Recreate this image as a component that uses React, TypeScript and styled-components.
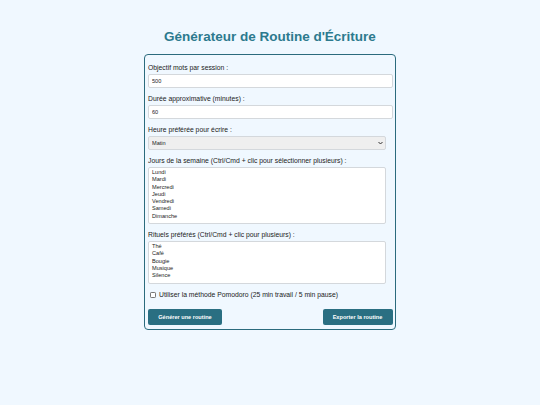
import styled, { createGlobalStyle } from "styled-components";

const GlobalStyle = createGlobalStyle`
  body {
    margin: 0;
    background: #f0f8ff;
    font-family: "Liberation Sans", Arial, sans-serif;
    color: #222;
  }
`;

const Page = styled.div`
  padding-top: 28px;
`;

const Title = styled.h1`
  margin: 0 0 8px;
  text-align: center;
  font-size: 13.5px;
  line-height: 18px;
  font-weight: bold;
  color: #2c7a8e;
`;

const Card = styled.form`
  width: 252px;
  box-sizing: border-box;
  margin: 0 auto;
  padding: 8px 3px 4px 3px;
  border: 1.5px solid #2b6b7d;
  border-radius: 4px;
  background: #f0f8ff;
`;

const Field = styled.div`
  margin-bottom: 6px;
`;

const Label = styled.label`
  display: block;
  font-size: 6.8px;
  line-height: 10px;
  margin-bottom: 1px;
  color: #222;
`;

const TextInput = styled.input`
  display: block;
  box-sizing: border-box;
  width: 245px;
  height: 14px;
  margin: 0;
  padding: 0 3px;
  border: 1px solid #d4d8dc;
  border-radius: 2px;
  background: #fff;
  font-family: inherit;
  font-size: 5.6px;
  color: #222;
  outline: none;
`;

const DropdownWrap = styled.div`
  position: relative;
  width: 238px;
`;

const Dropdown = styled.select`
  display: block;
  box-sizing: border-box;
  width: 100%;
  height: 14px;
  margin: 0;
  padding: 0 3px;
  border: 1px solid #d4d8dc;
  border-radius: 2px;
  background: #efefef;
  font-family: inherit;
  font-size: 5.6px;
  color: #222;
  appearance: none;
  outline: none;
`;

const Chevron = styled.svg`
  position: absolute;
  right: 3px;
  top: 5px;
  width: 5px;
  height: 4px;
  pointer-events: none;
`;

const ListBox = styled.select<{ $height: number }>`
  display: block;
  box-sizing: border-box;
  width: 238px;
  height: ${(p) => p.$height}px;
  margin: 0;
  padding: 1px 3px;
  border: 1px solid #d4d8dc;
  border-radius: 2px;
  background: #fff;
  font-family: inherit;
  font-size: 5.6px;
  color: #222;
  overflow: hidden;
  outline: none;

  option {
    padding: 0;
    line-height: 7.3px;
    height: 7.3px;
  }
`;

const CheckRow = styled.label`
  display: flex;
  align-items: center;
  gap: 3px;
  margin: 3px 0 9px 2px;
  font-size: 6.8px;
  line-height: 10px;
`;

const Check = styled.input`
  appearance: none;
  box-sizing: border-box;
  width: 6px;
  height: 6px;
  margin: 0;
  border: 0.8px solid #767676;
  border-radius: 1.2px;
  background: #fff;
`;

const Actions = styled.div`
  display: flex;
  justify-content: space-between;
  margin-right: -0.5px;
`;

const Button = styled.button<{ $width: number }>`
  width: ${(p) => p.$width}px;
  height: 16px;
  padding: 0;
  border: none;
  border-radius: 2px;
  background: #2a6f82;
  color: #fff;
  font-family: inherit;
  font-size: 5.6px;
  font-weight: bold;
  cursor: pointer;
`;

const days = ["Lundi", "Mardi", "Mercredi", "Jeudi", "Vendredi", "Samedi", "Dimanche"];
const rituals = ["Thé", "Café", "Bougie", "Musique", "Silence"];

export default function App() {
  return (
    <>
      <GlobalStyle />
      <Page>
        <Title>Générateur de Routine d'Écriture</Title>
        <Card onSubmit={(e) => e.preventDefault()}>
          <Field>
            <Label htmlFor="goal">Objectif mots par session :</Label>
            <TextInput id="goal" type="number" defaultValue={500} />
          </Field>
          <Field>
            <Label htmlFor="duration">Durée approximative (minutes) :</Label>
            <TextInput id="duration" type="number" defaultValue={60} />
          </Field>
          <Field>
            <Label htmlFor="time">Heure préférée pour écrire :</Label>
            <DropdownWrap>
              <Dropdown id="time" defaultValue="Matin">
                <option>Matin</option>
                <option>Après-midi</option>
                <option>Soir</option>
                <option>Nuit</option>
              </Dropdown>
              <Chevron viewBox="0 0 10 8">
                <path d="M1 2 L5 6 L9 2" fill="none" stroke="#333" strokeWidth="2" />
              </Chevron>
            </DropdownWrap>
          </Field>
          <Field>
            <Label htmlFor="days">Jours de la semaine (Ctrl/Cmd + clic pour sélectionner plusieurs) :</Label>
            <ListBox id="days" multiple $height={57}>
              {days.map((d) => (
                <option key={d}>{d}</option>
              ))}
            </ListBox>
          </Field>
          <Field>
            <Label htmlFor="rituals">Rituels préférés (Ctrl/Cmd + clic pour plusieurs) :</Label>
            <ListBox id="rituals" multiple $height={43}>
              {rituals.map((r) => (
                <option key={r}>{r}</option>
              ))}
            </ListBox>
          </Field>
          <CheckRow>
            <Check type="checkbox" />
            Utiliser la méthode Pomodoro (25 min travail / 5 min pause)
          </CheckRow>
          <Actions>
            <Button type="button" $width={74}>Générer une routine</Button>
            <Button type="button" $width={70}>Exporter la routine</Button>
          </Actions>
        </Card>
      </Page>
    </>
  );
}
